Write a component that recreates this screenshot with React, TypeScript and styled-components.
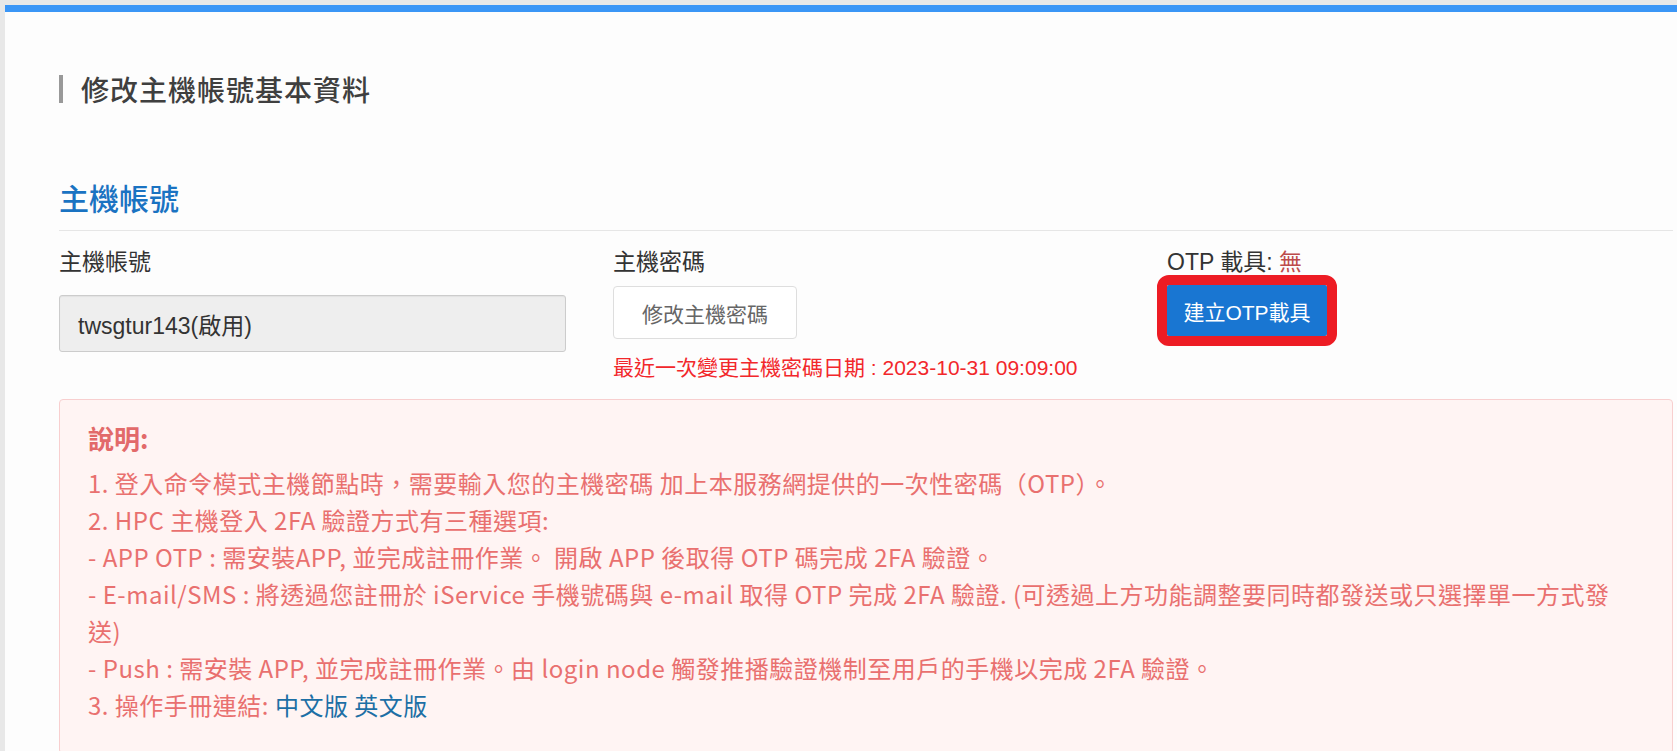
import styled, { createGlobalStyle } from 'styled-components';

const GlobalStyle = createGlobalStyle`
  html, body {
    margin: 0;
    padding: 0;
    overflow: hidden;
    background-color: #e8e8e8;
  }
  * {
    box-sizing: border-box;
  }
`;

const Page = styled.div`
  margin: 5px 0 0 5px;
  min-height: calc(100vh - 5px);
  background-color: #fdfdfd;
  border-top: 7px solid #3b96f6;
  padding: 0 4px 0 54px;
  font-family: "Liberation Sans", "Noto Sans CJK TC", sans-serif;
  color: #333;
`;

const PageTitle = styled.h2`
  margin: 63px 0 0 0;
  height: 28px;
  line-height: 28px;
  font-size: 28px;
  font-weight: 500;
  letter-spacing: 1px;
  color: #3f3f3f;
  border-left: 4px solid #999;
  padding-left: 18px;
  font-family: "Noto Sans CJK TC", sans-serif;
`;

const SectionTitle = styled.h3`
  margin: 76px 0 0 0;
  padding-bottom: 15px;
  line-height: 36px;
  font-size: 30px;
  font-weight: 500;
  color: #1a73c2;
  border-bottom: 1px solid #e6e6e6;
  font-family: "Noto Sans CJK TC", sans-serif;
`;

const FieldRow = styled.div`
  display: grid;
  grid-template-columns: 554px 554px 1fr;
  margin-top: 16px;
`;

const Field = styled.div`
  display: flex;
  flex-direction: column;
  align-items: flex-start;
`;

const Label = styled.div`
  font-size: 23px;
  line-height: 30px;
  color: #333;
`;

const Danger = styled.span`
  color: #bd4b4b;
`;

const ReadOnlyInput = styled.div`
  margin-top: 18px;
  width: 507px;
  height: 57px;
  display: flex;
  align-items: center;
  padding: 0 18px;
  font-size: 23px;
  color: #333;
  background-color: #eee;
  border: 1px solid #ccc;
  border-radius: 3px;
  box-shadow: inset 0 1px 1px rgba(0, 0, 0, 0.05);
`;

const Button = styled.button<{ $primary?: boolean; $marked?: boolean }>`
  margin-top: ${({ $primary }) => ($primary ? '8px' : '9px')};
  height: ${({ $primary }) => ($primary ? '51px' : '53px')};
  width: ${({ $primary }) => ($primary ? '160px' : '184px')};
  font-family: "Liberation Sans", "Noto Sans CJK TC", sans-serif;
  font-size: 21px;
  padding: 0;
  cursor: pointer;
  border-radius: ${({ $primary }) => ($primary ? '2px' : '4px')};
  border: 1px solid ${({ $primary }) => ($primary ? '#1976d2' : '#dedede')};
  background-color: ${({ $primary }) => ($primary ? '#1976d2' : '#fff')};
  color: ${({ $primary }) => ($primary ? '#fff' : '#666')};
  ${({ $marked }) => $marked && `
    outline: 10px solid #ed1c24;
    outline-offset: 0;
  `}
`;

const ChangedAt = styled.div`
  margin-top: 16px;
  font-size: 21px;
  line-height: 26px;
  color: #f2272b;
`;

const NoteBox = styled.div`
  margin-top: 18px;
  background-color: #fff4f3;
  border: 1px solid #f8cfcf;
  border-radius: 4px;
  padding: 21px 40px 30px 28px;
  font-family: "Noto Sans CJK TC", sans-serif;
  color: #e9706f;
`;

const NoteTitle = styled.div`
  font-size: 26px;
  line-height: 34px;
  font-weight: 700;
  color: #e26a6a;
  margin-bottom: 9px;
`;

const NoteLine = styled.div`
  font-size: 24px;
  line-height: 37px;
  letter-spacing: 0.5px;
`;

const NoteLink = styled.a`
  color: #1d6fa5;
  text-decoration: none;
`;

export default function App() {
  return (
    <>
      <GlobalStyle />
      <Page>
        <PageTitle>修改主機帳號基本資料</PageTitle>
        <SectionTitle>主機帳號</SectionTitle>
        <FieldRow>
          <Field>
            <Label>主機帳號</Label>
            <ReadOnlyInput>twsgtur143(啟用)</ReadOnlyInput>
          </Field>
          <Field>
            <Label>主機密碼</Label>
            <Button>修改主機密碼</Button>
            <ChangedAt>最近一次變更主機密碼日期 : 2023-10-31 09:09:00</ChangedAt>
          </Field>
          <Field>
            <Label>
              OTP 載具: <Danger>無</Danger>
            </Label>
            <Button $primary $marked>建立OTP載具</Button>
          </Field>
        </FieldRow>
        <NoteBox>
          <NoteTitle>說明:</NoteTitle>
          <NoteLine>1. 登入命令模式主機節點時，需要輸入您的主機密碼 加上本服務網提供的一次性密碼（OTP）。</NoteLine>
          <NoteLine>2. HPC 主機登入 2FA 驗證方式有三種選項:</NoteLine>
          <NoteLine>- APP OTP : 需安裝APP, 並完成註冊作業。 開啟 APP 後取得 OTP 碼完成 2FA 驗證。</NoteLine>
          <NoteLine>- E-mail/SMS : 將透過您註冊於 iService 手機號碼與 e-mail 取得 OTP 完成 2FA 驗證. (可透過上方功能調整要同時都發送或只選擇單一方式發送)</NoteLine>
          <NoteLine>- Push : 需安裝 APP, 並完成註冊作業。由 login node 觸發推播驗證機制至用戶的手機以完成 2FA 驗證。</NoteLine>
          <NoteLine>
            3. 操作手冊連結: <NoteLink href="#">中文版</NoteLink> <NoteLink href="#">英文版</NoteLink>
          </NoteLine>
        </NoteBox>
      </Page>
    </>
  );
}
